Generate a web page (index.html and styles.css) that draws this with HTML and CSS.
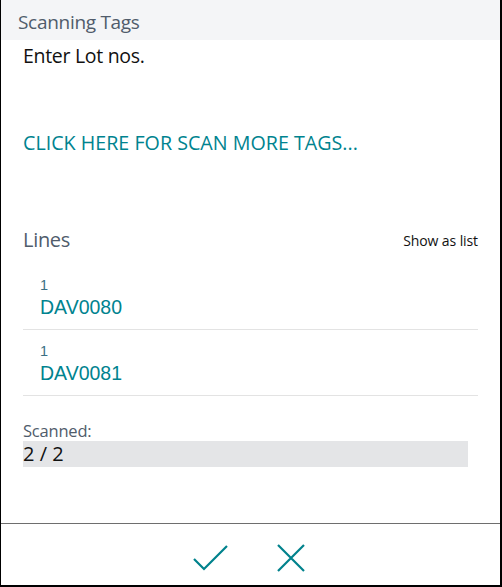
FILE: index.html
```html
<!DOCTYPE html>
<html>
<head>
<meta charset="utf-8">
<link rel="stylesheet" href="styles.css">
</head>
<body>
<div class="dialog">
  <div class="header">Scanning Tags</div>
  <div class="content">
    <div class="instruction">Enter Lot nos.</div>
    <a class="scan-link">CLICK HERE FOR SCAN MORE TAGS...</a>
    <div class="lines-head">
      <span class="lines-title">Lines</span>
      <span class="show-list">Show as list</span>
    </div>
    <div class="lines">
      <div class="line">
        <div class="qty">1</div>
        <div class="lot">DAV0080</div>
      </div>
      <div class="line">
        <div class="qty">1</div>
        <div class="lot">DAV0081</div>
      </div>
    </div>
    <div class="field">
      <div class="field-label">Scanned:</div>
      <div class="field-value">2 / 2</div>
    </div>
  </div>
  <div class="footer">
    <button class="icon-btn" aria-label="OK">
      <svg width="36" height="28" viewBox="0 0 36 28"><path d="M1 15 L11 25 L34 2" fill="none" stroke="#00828c" stroke-width="2.2"/></svg>
    </button>
    <button class="icon-btn" aria-label="Cancel">
      <svg width="28" height="28" viewBox="0 0 28 28"><path d="M1 1 L27 27 M27 1 L1 27" fill="none" stroke="#00828c" stroke-width="2.2"/></svg>
    </button>
  </div>
</div>
</body>
</html>
```
FILE: styles.css
```css
* { box-sizing: border-box; }
html, body { margin: 0; padding: 0; }
body {
  width: 502px;
  height: 587px;
  font-family: "Open Sans", "Noto Sans", sans-serif;
  background: #fff;
}
.dialog {
  width: 502px;
  height: 587px;
  border-left: 1px solid #000;
  border-right: 2px solid #000;
  border-bottom: 2px solid #000;
  display: flex;
  flex-direction: column;
}
.header {
  height: 40px;
  background: #f4f5f7;
  color: #505c6b;
  font-size: 19px;
  padding: 4px 0 0 17px;
  line-height: 36px;
  letter-spacing: -0.3px;
}
.content {
  flex: 1;
  padding: 0 22px 0 22px;
  display: flex;
  flex-direction: column;
}
.instruction {
  font-size: 19.5px;
  color: #111;
  margin-top: 2px;
  line-height: 28px;
  letter-spacing: -0.3px;
}
.scan-link {
  color: #00838f;
  font-size: 19.7px;
  margin-top: 59px;
  line-height: 28px;
  cursor: pointer;
}
.lines-head {
  margin-top: 69px;
  display: flex;
  justify-content: space-between;
  align-items: center;
  height: 28px;
}
.lines-title {
  color: #505c6b;
  font-size: 20px;
  letter-spacing: -0.3px;
  margin-top: -2px;
}
.show-list {
  color: #111;
  font-size: 14px;
  letter-spacing: -0.1px;
}
.lines {
  margin-top: 10px;
}
.line {
  border-bottom: 1px solid #e3e3e3;
  padding: 12px 0 0 17px;
  height: 66px;
}
.qty {
  font-family: "Liberation Sans", Arial, sans-serif;
  font-size: 14.5px;
  color: #3a6f84;
  line-height: 18px;
}
.lot {
  font-family: "Liberation Sans", Arial, sans-serif;
  font-size: 19.5px;
  color: #00838f;
  line-height: 26px;
}
.field {
  margin-top: 25px;
  padding-right: 10px;
}
.field-label {
  font-size: 16.5px;
  color: #505c6b;
  line-height: 20px;
  letter-spacing: -0.2px;
}
.field-value {
  background: #e4e5e7;
  font-size: 20px;
  color: #111;
  height: 26px;
  line-height: 26px;
  letter-spacing: 0;
}
.footer {
  height: 62px;
  border-top: 1px solid #6e6e6e;
  display: flex;
  justify-content: center;
  align-items: center;
  gap: 48px;
  padding-top: 6px;
  padding-right: 4px;
}
.icon-btn {
  background: none;
  border: none;
  padding: 0;
  display: flex;
  cursor: pointer;
}
```
